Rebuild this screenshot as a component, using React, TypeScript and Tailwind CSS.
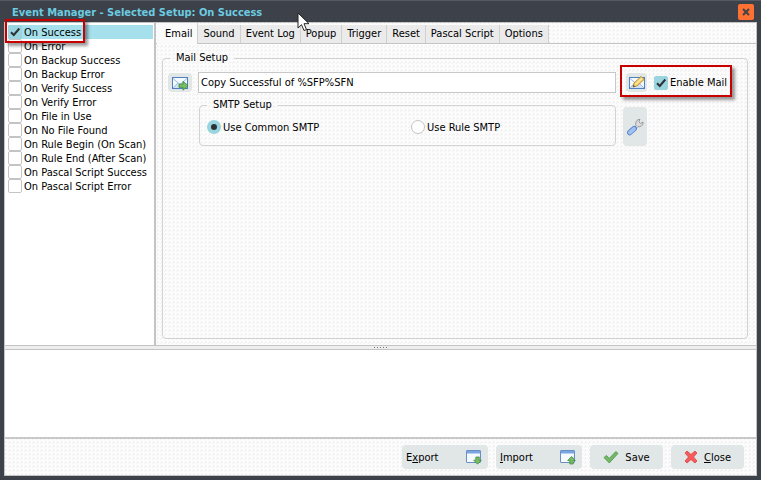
import type { InputHTMLAttributes, ReactNode } from 'react'
import { clsx } from 'clsx'

const events = [
  'On Success',
  'On Error',
  'On Backup Success',
  'On Backup Error',
  'On Verify Success',
  'On Verify Error',
  'On File in Use',
  'On No File Found',
  'On Rule Begin (On Scan)',
  'On Rule End (After Scan)',
  'On Pascal Script Success',
  'On Pascal Script Error',
]

const tabs = ['Email', 'Sound', 'Event Log', 'Popup', 'Trigger', 'Reset', 'Pascal Script', 'Options']

const texture =
  'bg-[#fcfcfc] bg-[linear-gradient(45deg,#f0f0f0_25%,transparent_25%,transparent_75%,#f0f0f0_75%)] bg-[length:4px_4px]'

const radioStyle =
  'size-3.5 appearance-none rounded-full border border-[#c4c4c4] bg-white checked:border-4 checked:border-[#9ad5df] checked:bg-[#2c3238]'

function Check({ className, ...props }: InputHTMLAttributes<HTMLInputElement>) {
  return (
    <span className="relative flex shrink-0">
      <input
        type="checkbox"
        className={clsx('peer appearance-none rounded-xs border border-[#c4c4c4] bg-white checked:border-[#9ad5df] checked:bg-[#9ad5df]', className)}
        {...props}
      />
      <svg viewBox="0 0 14 14" className="pointer-events-none absolute inset-0 hidden h-full w-full peer-checked:block" fill="none" stroke="#2c3238" strokeWidth="2">
        <path d="M3 7.2 5.8 10 11.3 3.5" />
      </svg>
    </span>
  )
}

// Red frame laid over the control it points out
function Callout({ className }: { className: string }) {
  return <span className={clsx('pointer-events-none absolute z-10 border-2 border-[#c80000] shadow-[3px_3px_3px_rgba(0,0,0,0.4)]', className)} />
}

function Envelope({ children }: { children?: ReactNode }) {
  return (
    <svg width="18" height="16" viewBox="0 0 18 16" fill="none">
      <rect x="1.5" y="2.5" width="15" height="11" fill="#f4f9fe" stroke="#4f80c0" />
      <path d="M2 13 7 8l2 1.5L11 8l5 5z" fill="#cfe2f8" />
      <path d="M2 3.5 9 9.5 16 3.5M2 13 6.8 8M16 13 11.2 8" stroke="#9dbce4" />
      {children}
    </svg>
  )
}

function WindowIcon({ up }: { up?: boolean }) {
  return (
    <svg width="16" height="16" viewBox="0 0 16 16">
      <rect x=".5" y="1.5" width="14" height="12" rx=".5" fill="#f5faff" stroke="#6a8fc4" />
      <path d="M1 2h13v2.5H1z" fill="#79a6e0" />
      <path d="M8 12.5 14 6v6.5z" fill="#d6e8fa" />
      <path
        d={up ? 'M11.5 7.5 15.3 11.5H13.2V15H9.8V11.5H7.7Z' : 'M9.8 8h3.4v3.2h2.1L11.5 15.2 7.7 11.2h2.1Z'}
        fill="#78bd62"
        stroke="#388435"
        strokeWidth=".7"
      />
    </svg>
  )
}

function FooterButton({ className, children }: { className?: string; children: ReactNode }) {
  return (
    <button type="button" className={clsx('flex h-6 items-center rounded-sm bg-[#e1e6e7]', className)}>
      {children}
    </button>
  )
}

function MailSetup() {
  return (
    <fieldset className="mb-1.5 ml-1.5 mr-2 mt-2 min-w-0 flex-1 rounded-sm border border-[#d2d2d2] pl-[5px] pr-5">
      <legend className="ml-0.5 h-3 px-1.5 leading-3">Mail Setup</legend>
      <div className="mt-2 flex items-center">
        <button type="button" aria-label="Send test mail" className="flex h-[19px] w-6 shrink-0 items-center justify-center rounded-sm bg-[#e1e6e7]">
          <Envelope>
            <path d="M8 9h4V6.2l5 4.4-5 4.6v-2.8H8z" fill="#78bd62" stroke="#3e8a3a" strokeWidth=".8" />
          </Envelope>
        </button>
        <input
          aria-label="Mail subject"
          defaultValue="Copy Successful of %SFP%SFN"
          className="ml-1.5 h-[21px] min-w-0 flex-1 border border-[#c8c8c8] bg-white px-0.5"
        />
        <div className="relative ml-2.5 flex shrink-0 items-center">
          <Callout className="-left-1.5 -right-[5px] -top-2 h-8" />
          <button type="button" aria-label="Edit mail" className="flex h-[19px] w-[21px] items-center justify-center rounded-sm bg-[#e1e6e7]">
            <Envelope>
              <path d="m5 12 1-4L13.2 1.4l3 3L9 11z" fill="#f6ce63" stroke="#b07d2c" strokeWidth=".8" />
              <path d="m7.5 9.5 6.5-6.3" stroke="#fdeaa8" strokeWidth="1.4" />
              <path d="m5 12 .5-2 1.6 1.5z" fill="#444" />
            </Envelope>
          </button>
          <label className="ml-[7px] flex items-center gap-0.5">
            <Check defaultChecked className="size-3.5" />
            <span>Enable Mail</span>
          </label>
        </div>
      </div>
      <div className="mt-1.5 flex">
        <fieldset className="ml-[31px] h-[47px] min-w-0 flex-1 rounded-sm border border-[#d2d2d2] pl-[7px]">
          <legend className="h-3 px-1.5 leading-3">SMTP Setup</legend>
          <div className="mt-2 grid grid-cols-2">
            <label className="flex items-center gap-0.5">
              <input type="radio" name="smtp" defaultChecked className={radioStyle} />
              <span className="pt-0.5">Use Common SMTP</span>
            </label>
            <label className="flex items-center gap-0.5">
              <input type="radio" name="smtp" className={radioStyle} />
              <span className="pt-0.5">Use Rule SMTP</span>
            </label>
          </div>
        </fieldset>
        <button type="button" aria-label="SMTP settings" className="ml-[7px] mr-20 mt-2 flex h-[39px] w-6 items-center justify-center rounded-sm bg-[#e1e6e7]">
          <svg width="18" height="18" viewBox="0 0 18 18">
            <path d="M8.3 10 10 7.5C8.8 4.4 11 1 14 1.4L12.8 3.8 14.6 5.4 17 4C17.4 7.4 14.5 9.2 11.8 8.6L9.6 10.9z" fill="#dcdcdc" stroke="#858585" strokeWidth=".8" />
            <path d="m8.2 10.6-4.4 4" stroke="#5c82c8" strokeWidth="5.4" strokeLinecap="round" />
            <path d="m8 10.8-4.2 3.8" stroke="#9fc2f3" strokeWidth="3.8" strokeLinecap="round" />
          </svg>
        </button>
      </div>
    </fieldset>
  )
}

export default function App() {
  return (
    <div className="flex h-screen flex-col border-t border-[#555b64] bg-[#3d4149] font-['DejaVu_Sans_Condensed','DejaVu_Sans',sans-serif] text-[11px] leading-3.5 text-black">
      <header className="flex h-[21px] shrink-0 items-center justify-between pl-3 pr-[7px]">
        <h1 className="pt-0.5 font-bold text-[#6bcbe0]">Event Manager - Selected Setup: On Success</h1>
        <button type="button" aria-label="Close window" className="flex size-4 items-center justify-center rounded-xs bg-[#ff7033]">
          <svg width="8" height="8" viewBox="0 0 8 8" stroke="#40434a" strokeWidth="2">
            <path d="m1 1 6 6M7 1 1 7" />
          </svg>
        </button>
      </header>

      <main className={clsx('mx-1 mb-1 flex min-h-0 flex-1 flex-col border border-[#c4c4c4]', texture)}>
        <div className="flex min-h-0 flex-1">
          <ul className="w-[151px] shrink-0 border-r-2 border-[#c4c4c4] bg-white pl-[3px] pt-0.5">
            {events.map((name, i) => (
              <li key={name} className={clsx('relative', i === 0 && 'mr-px bg-[#a6e0ec]')}>
                <label className="flex h-3.5 items-center gap-0.5">
                  <Check defaultChecked={i === 0} className="size-3.5" />
                  <span className="pt-0.5">{name}</span>
                </label>
                {i === 0 && <Callout className="-left-[3px] -top-1.5 h-6 w-20" />}
              </li>
            ))}
          </ul>
          <section className="flex min-w-0 flex-1 flex-col">
            <div role="tablist" className="flex h-[21px] shrink-0 items-end border-b border-[#c4c4c4] pl-px">
              {tabs.map((name, i) => (
                <button
                  key={name}
                  type="button"
                  role="tab"
                  aria-selected={i === 0}
                  className={clsx('border-r border-[#d0d0d0]', i === 0 ? '-mb-px h-[21px] bg-[#fafafa] pl-2 pr-[5px]' : 'h-[18px] bg-[#ebebeb] px-[5px]')}
                >
                  {name}
                </button>
              ))}
            </div>
            <MailSetup />
          </section>
        </div>

        <div className="flex h-[5px] shrink-0 items-center justify-center gap-0.5 border-y border-[#c4c4c4] bg-[#eee]">
          {[0, 1, 2, 3, 4].map((n) => (
            <span key={n} className="size-px bg-[#777]" />
          ))}
        </div>
        <textarea aria-label="Event details" className="h-[89px] shrink-0 resize-none border-b-2 border-[#c8c8c8] bg-white outline-none" />

        <footer className="flex h-9 shrink-0 items-center justify-end gap-2 pr-3">
          <FooterButton className="w-[86px] justify-between pl-1 pr-1.5">
            <span className="pt-px">E<u>x</u>port</span>
            <WindowIcon />
          </FooterButton>
          <FooterButton className="w-[86px] justify-between pl-1 pr-1.5">
            <span className="pt-px"><u>I</u>mport</span>
            <WindowIcon up />
          </FooterButton>
          <FooterButton className="w-[73px] justify-center gap-1.5">
            <svg width="16" height="16" viewBox="0 0 16 16">
              <path d="m1 8.6 2.4-2.2 2.8 3L12.8 2.6 15 4.4 6.3 14z" fill="#72b865" stroke="#4d9647" strokeWidth=".8" />
            </svg>
            <span className="pt-px">Save</span>
          </FooterButton>
          <FooterButton className="w-[73px] justify-center gap-1.5">
            <svg width="14" height="14" viewBox="0 0 14 14">
              <path d="m1 3 2-2 4 3.5L11 1l2 2-3.5 4 3.5 4-2 2-4-3.5L3 13l-2-2 3.5-4z" fill="#f65a5a" stroke="#d94343" strokeWidth=".8" />
            </svg>
            <span className="pt-px"><u>C</u>lose</span>
          </FooterButton>
        </footer>
      </main>

      <svg width="13" height="20" viewBox="0 0 13 20" className="pointer-events-none absolute left-[297px] top-3 z-20">
        <path d="M1 1v15l3.5-3.3L7 18.5l2.5-1L7 11.7h5z" fill="#fff" stroke="#222" />
      </svg>
    </div>
  )
}
